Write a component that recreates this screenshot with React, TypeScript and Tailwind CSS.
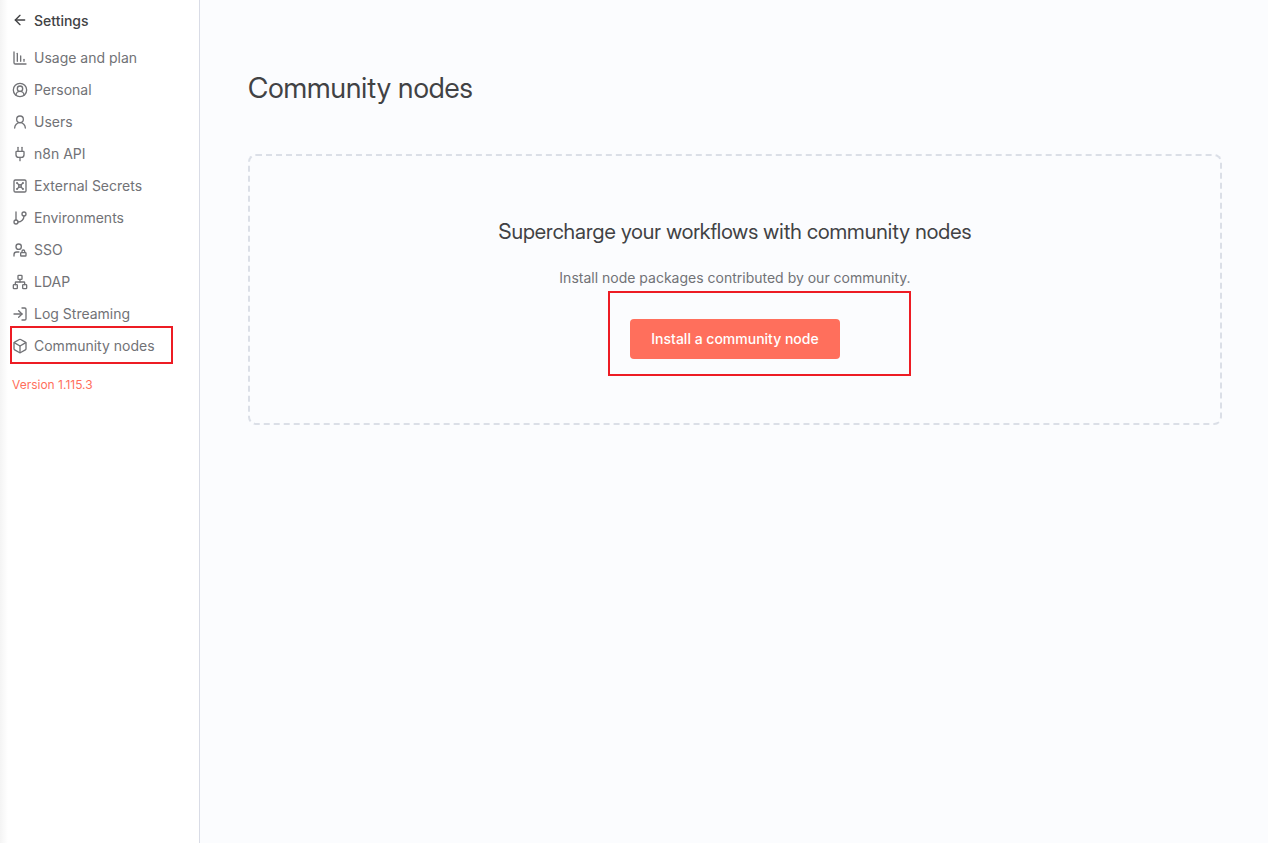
import {
  ArrowLeft,
  Box,
  ChartColumnDecreasing,
  CircleUserRound,
  GitBranch,
  LogIn,
  Network,
  Plug,
  UserLock,
  UserRound,
  Vault,
  type LucideIcon,
} from "lucide-react";

type NavItem = { label: string; icon: LucideIcon; marked?: boolean };

const items: NavItem[] = [
  { label: "Usage and plan", icon: ChartColumnDecreasing },
  { label: "Personal", icon: CircleUserRound },
  { label: "Users", icon: UserRound },
  { label: "n8n API", icon: Plug },
  { label: "External Secrets", icon: Vault },
  { label: "Environments", icon: GitBranch },
  { label: "SSO", icon: UserLock },
  { label: "LDAP", icon: Network },
  { label: "Log Streaming", icon: LogIn },
  { label: "Community nodes", icon: Box, marked: true },
];

function Sidebar() {
  return (
    <aside className="w-[200px] shrink-0 border-r border-[#d9dce6] bg-white bg-linear-to-r from-[#f4f4f4] to-white to-[8px] px-3 pt-3">
      <a href="#back" className="flex items-center gap-1.5 text-sm leading-[18px] font-medium text-[#414244]">
        <ArrowLeft size={16} className="mb-0.5" />
        Settings
      </a>
      <nav className="mt-3">
        <ul>
          {items.map(({ label, icon: Icon, marked }) => (
            <li key={label} className="relative">
              <a href="#settings" className="flex h-8 items-center gap-1.5 text-sm text-[#717276]">
                <Icon size={16} />
                {label}
              </a>
              {marked && (
                <span className="pointer-events-none absolute -top-1 right-3.5 -bottom-0.5 -left-0.5 border-2 border-[#ed1c24]" />
              )}
            </li>
          ))}
        </ul>
      </nav>
      <a href="#version" className="mt-[15px] block text-xs text-[#ff6f5c]">
        Version 1.115.3
      </a>
    </aside>
  );
}

export default function App() {
  return (
    <div className="flex min-h-screen bg-[#fbfcfe] font-[Inter,sans-serif]">
      <Sidebar />
      <main className="min-w-0 flex-1 pt-[70px] pr-[46px] pb-12 pl-12">
        <h1 className="font-['Inter_Display',Inter,sans-serif] text-[28px] leading-9 text-[#414244]">
          Community nodes
        </h1>
        <section className="mt-12 flex flex-col items-center rounded-lg border-2 border-dashed border-[#dbdfe7] px-6 py-16 text-center">
          <h2 className="font-['Inter_Display',Inter,sans-serif] text-[21px] leading-6 text-[#414244]">
            Supercharge your workflows with community nodes
          </h2>
          <p className="mt-6 text-sm leading-5 text-[#717276]">Install node packages contributed by our community.</p>
          <div className="relative mt-[31px]">
            <button
              type="button"
              className="flex h-10 items-center rounded bg-[#ff6f5c] px-[21px] text-sm font-medium text-white"
            >
              Install a community node
            </button>
            <span className="pointer-events-none absolute -top-7 -right-[71px] -bottom-[17px] -left-[22px] border-2 border-[#ed1c24]" />
          </div>
        </section>
      </main>
    </div>
  );
}
